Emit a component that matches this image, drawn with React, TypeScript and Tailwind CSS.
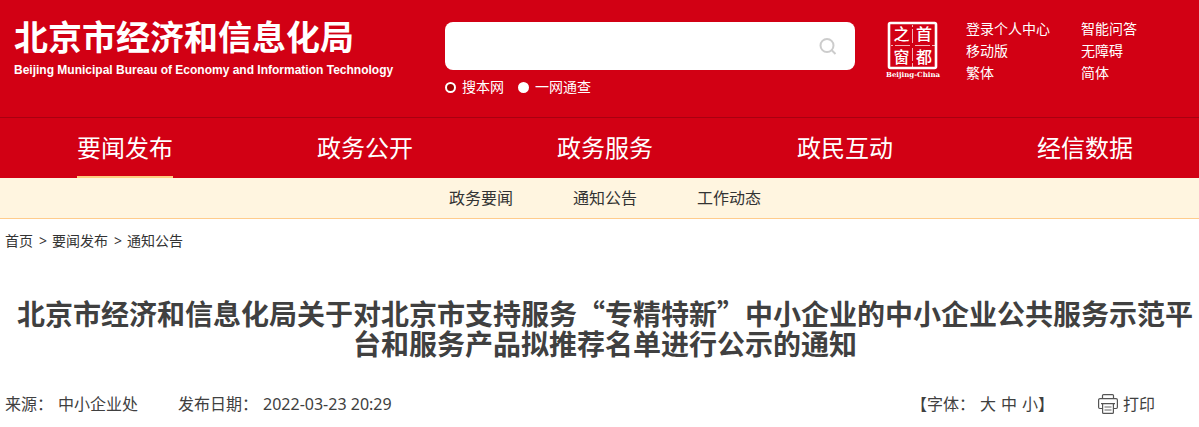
const FONT = "font-['Noto_Sans','Noto_Sans_CJK_SC',sans-serif]";

const quickLinks = ["登录个人中心", "智能问答", "移动版", "无障碍", "繁体", "简体"];
const mainNav = ["要闻发布", "政务公开", "政务服务", "政民互动", "经信数据"];
const subNav = ["政务要闻", "通知公告", "工作动态"];
const crumbs = ["首页", "要闻发布", "通知公告"];

function CapitalWindowLogo() {
  return (
    <svg width="56" height="60" viewBox="0 0 56 60" role="img" aria-label="首都之窗">
      <rect x="4" y="3" width="47" height="45" rx="1.5" fill="none" stroke="#fff" strokeWidth="2.6" />
      <path d="M27.500 5v2M27.500 9v14M27.500 28v13M27.500 43v4" stroke="#fff" strokeOpacity=".7" />
      <path d="M6 25.500h2M10 25.500h15M30 25.500h15M47 25.500h3" stroke="#fff" strokeOpacity=".7" />
      <g fill="#fff" fontFamily="'Noto Sans CJK SC', sans-serif" fontWeight="500" fontSize="16" textAnchor="middle">
        <text x="16.500" y="20">之</text>
        <text x="39" y="20">首</text>
        <text x="16.500" y="43">窗</text>
        <text x="39" y="43">都</text>
      </g>
      <text
        x="28"
        y="57"
        fill="#fff"
        fontFamily="'DejaVu Serif', serif"
        fontWeight="700"
        fontSize="7"
        textAnchor="middle"
      >
        Beijing-China
      </text>
    </svg>
  );
}

function PrinterIcon() {
  return (
    <svg width="20" height="20" viewBox="0 0 20 20" fill="none" stroke="#555" strokeWidth="1.2" aria-hidden="true">
      <path d="M4.500 4.500V1.600a1 1 0 0 1 1-1h9a1 1 0 0 1 1 1v2.900" />
      <path d="M4.600 14.500H1.800a1.200 1.200 0 0 1-1.200-1.200V6a1.400 1.400 0 0 1 1.400-1.400h16A1.400 1.400 0 0 1 19.400 6v7.300a1.200 1.200 0 0 1-1.200 1.200H15.400" />
      <path d="M4.600 9.600h10.800v8.800a1 1 0 0 1-1 1H5.600a1 1 0 0 1-1-1zM3 9.600h1.600M15.400 9.600H17" />
      <path d="M6.500 13h7M6.500 16h7" stroke="#999" strokeWidth="1.500" />
    </svg>
  );
}

function SearchForm() {
  return (
    <form className="ml-[46px] w-[410px] shrink-0 pt-[22px]" onSubmit={(e) => e.preventDefault()}>
      <div className="flex h-12 items-center rounded-lg bg-white pr-[18px]">
        <input type="text" aria-label="搜索" className="h-full min-w-0 flex-1 rounded-lg px-4 text-base text-[#333] outline-none" />
        <button type="submit" aria-label="搜索">
          <svg width="18" height="18" viewBox="0 0 18 18" fill="none" stroke="#ccc" strokeWidth="2">
            <circle cx="8" cy="8.500" r="6.500" />
            <path d="M12.500 13l4 4" />
          </svg>
        </button>
      </div>
      <div className="mt-[7px] flex gap-3.5 text-sm leading-5 text-white">
        <label className="flex items-center gap-1.5">
          <input
            type="radio"
            name="scope"
            defaultChecked
            className="size-[11px] appearance-none rounded-full border-2 border-white bg-white checked:bg-[#9b0000]"
          />
          搜本网
        </label>
        <label className="flex items-center gap-1.5">
          <input
            type="radio"
            name="scope"
            className="size-[11px] appearance-none rounded-full border-2 border-white bg-white checked:bg-[#9b0000]"
          />
          一网通查
        </label>
      </div>
    </form>
  );
}

export default function App() {
  return (
    <div lang="zh-CN" className={"min-h-screen overflow-x-hidden bg-white text-[#333] " + FONT}>
      <header className="bg-[#d20014] text-white">
        <div className="flex h-[117px] pl-3.5">
          <a href="#" className="block w-[385px] shrink-0 whitespace-nowrap pt-[15px]">
            <span className="block font-['Noto_Sans_CJK_SC',sans-serif] text-[34px] leading-[42px] font-bold">
              北京市经济和信息化局
            </span>
            <span className="block font-['Liberation_Sans',sans-serif] text-[12px] leading-[26px] font-bold">
              Beijing Municipal Bureau of Economy and Information Technology
            </span>
          </a>
          <SearchForm />
          <a href="#" className="ml-[30px] shrink-0 pt-5">
            <CapitalWindowLogo />
          </a>
          <nav className="ml-[25px] grid shrink-0 grid-cols-[115px_auto] content-start pt-[18px] text-sm leading-[22px]">
            {quickLinks.map((t) => (
              <a key={t} href="#">
                {t}
              </a>
            ))}
          </nav>
        </div>
        <nav className="border-t border-[#a80010]">
          <div className="-mr-1.5 grid grid-cols-5 justify-items-center pl-[5px] text-2xl">
            {mainNav.map((t, i) => (
              <a
                key={t}
                href="#"
                className={
                  i === 0
                    ? "h-15 border-b-2 border-[#ffcc80] leading-[60px]"
                    : "h-15 leading-[60px]"
                }
              >
                {t}
              </a>
            ))}
          </div>
        </nav>
      </header>

      <nav className="border-b border-[#ffcc8c] bg-[#fff5e0]">
        <div className="-mr-1.5 flex justify-center gap-[60px] pl-[5px] text-base leading-10">
          {subNav.map((t) => (
            <a key={t} href="#">
              {t}
            </a>
          ))}
        </div>
      </nav>

      <main className="-mr-1.5 pl-[5px]">
        <nav aria-label="位置" className="flex gap-1.5 pt-3 text-sm leading-5">
          {crumbs.map((t, i) => (
            <span key={t} className="flex gap-[5px]">
              {i > 0 && <span>&gt;</span>}
              <a href="#">{t}</a>
            </span>
          ))}
        </nav>
        <h1 className="mt-[47px] text-center font-['Noto_Sans_CJK_SC',sans-serif] text-[28px] leading-[30px] font-bold text-[#404040]">
          北京市经济和信息化局关于对北京市支持服务“专精特新”中小企业的中小企业公共服务示范平台和服务产品拟推荐名单进行公示的通知
        </h1>
        <div className="flex items-center pt-[34px] pr-[50px] text-base leading-6 text-[#404040]">
          <span className="flex gap-[5px]">
            <span>来源：</span>
            <span>中小企业处</span>
          </span>
          <span className="ml-10 flex gap-[5px]">
            <span>发布日期：</span>
            <span>2022-03-23 20:29</span>
          </span>
          <span className="ml-auto flex gap-[5px]">
            <span>【字体：</span>
            <button type="button">大</button>
            <button type="button">中</button>
            <span>
              <button type="button">小</button>】
            </span>
          </span>
          <button type="button" className="ml-11 flex items-center gap-[5px]">
            <PrinterIcon />
            打印
          </button>
        </div>
      </main>
    </div>
  );
}
